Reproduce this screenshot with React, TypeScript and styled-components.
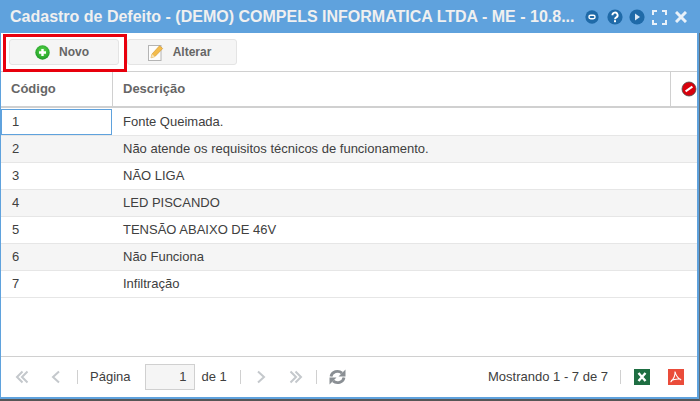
import React from 'react'
import styled, { createGlobalStyle } from 'styled-components'

const GlobalStyle = createGlobalStyle`
    html, body {
        margin: 0;
        padding: 0;
        background: #fff;
    }
    body {
        font-family: "Liberation Sans", Arial, sans-serif;
        color: #404040;
    }
`

const Window = styled.div`
    position: relative;
    box-sizing: border-box;
    width: 700px;
    height: 401px;
    display: flex;
    flex-direction: column;
    background: #fff;
    border-right: 1px solid #5b6b78;
    border-bottom: 2px solid #565656;
`

const TitleBar = styled.div`
    height: 33px;
    flex: none;
    margin-right: -1px;
    padding: 1px 13px 0 10px;
    box-sizing: border-box;
    display: flex;
    align-items: center;
    background: #5fa2dd;
`

const Title = styled.div`
    flex: 1;
    font-size: 16px;
    font-weight: 700;
    color: #f0f0f0;
    white-space: nowrap;
`

const TitleTool = styled.span<{ $gap: number }>`
    display: flex;
    margin-left: ${p => p.$gap}px;
`

const Body = styled.div`
    flex: 1;
    min-height: 0;
    display: flex;
    flex-direction: column;
    border-style: solid;
    border-color: #5fa2dd;
    border-width: 0 2px 2px 1px;
`

const Toolbar = styled.div`
    height: 39px;
    flex: none;
    box-sizing: border-box;
    padding: 6px 8px 0;
    display: flex;
    gap: 8px;
    border-bottom: 1px solid #d0d0d0;
`

const ToolButton = styled.button<{ $shift: number }>`
    width: 110px;
    height: 26px;
    box-sizing: border-box;
    padding: 0 ${p => p.$shift}px 0 0;
    display: flex;
    align-items: center;
    justify-content: center;
    gap: 9px;
    background: #f5f5f5;
    border: 1px solid #e4e4e4;
    border-radius: 3px;
    font-family: inherit;
    font-size: 12px;
    font-weight: 700;
    color: #666;
`

const Highlight = styled.div`
    position: absolute;
    left: 3px;
    top: 34px;
    width: 124px;
    height: 38px;
    box-sizing: border-box;
    border: 3px solid #e8000d;
`

const HeaderRow = styled.div`
    height: 36px;
    flex: none;
    box-sizing: border-box;
    display: flex;
    border-bottom: 2px solid #d0d0d0;
    font-size: 13px;
    font-weight: 700;
    color: #666;
`

const HeaderCell = styled.div<{ $width?: number }>`
    ${p => (p.$width ? `width: ${p.$width}px; flex: none;` : 'flex: 1;')}
    box-sizing: border-box;
    display: flex;
    align-items: center;
    padding: 0 0 2px 10px;
    border-right: 1px solid #d0d0d0;
`

const IconHeaderCell = styled.div`
    width: 26px;
    flex: none;
    display: flex;
    align-items: center;
    justify-content: flex-end;
`

const Rows = styled.div`
    flex: 1;
    padding-top: 1px;
`

const Row = styled.div<{ $alt: boolean }>`
    height: 27px;
    box-sizing: border-box;
    display: flex;
    background: ${p => (p.$alt ? '#f5f5f5' : '#fff')};
    border-bottom: 1px solid #e6e6e6;
    font-size: 13px;
    color: #404040;
`

const Cell = styled.div<{ $focused?: boolean }>`
    box-sizing: border-box;
    display: flex;
    align-items: center;
    width: 111px;
    flex: none;
    padding: 0 0 1px 10px;
    border: 1px solid ${p => (p.$focused ? '#5fa2dd' : 'transparent')};
`

const DescCell = styled.div`
    flex: 1;
    display: flex;
    align-items: center;
    padding: 0 0 2px 11px;
`

const Footer = styled.div`
    height: 41px;
    flex: none;
    box-sizing: border-box;
    padding: 0 13px 0 14px;
    display: flex;
    align-items: center;
    border-top: 1px solid #d0d0d0;
    font-size: 13px;
    color: #404040;
`

const PagerIcon = styled.span<{ $gap: number }>`
    display: flex;
    margin-right: ${p => p.$gap}px;
`

const Divider = styled.span<{ $gap: number }>`
    width: 1px;
    height: 14px;
    background: #d0d0d0;
    margin-right: ${p => p.$gap}px;
`

const PageLabel = styled.span<{ $gap: number }>`
    margin: 0 ${p => p.$gap}px 2px 0;
    white-space: nowrap;
`

const PageInput = styled.div`
    width: 50px;
    height: 26px;
    box-sizing: border-box;
    margin-right: 6px;
    padding: 0 8px 2px 0;
    display: flex;
    align-items: center;
    justify-content: flex-end;
    background: #f5f5f5;
    border: 1px solid #d0d0d0;
`

const Spacer = styled.div`
    flex: 1;
`

const CircleIcon = ({ size = 16, children }: { size?: number; children: React.ReactNode }) => (
    <svg width={size} height={size} viewBox="0 0 16 16">
        <circle cx="8" cy="8" r="7.6" fill="#1f6aa8" />
        {children}
    </svg>
)

const PlusIcon = () => (
    <svg width="15" height="15" viewBox="0 0 15 15">
        <defs>
            <radialGradient id="novoGreen" cx="50%" cy="40%" r="60%">
                <stop offset="0%" stopColor="#5fdc4c" />
                <stop offset="100%" stopColor="#1c9a26" />
            </radialGradient>
        </defs>
        <circle cx="7.5" cy="7.5" r="7.2" fill="url(#novoGreen)" />
        <path d="M7.5 4v7M4 7.5h7" stroke="#fff" strokeWidth="2.4" />
    </svg>
)

const PencilIcon = () => (
    <svg width="16" height="17" viewBox="0 0 16 17">
        <rect x="0.5" y="1.5" width="12.5" height="15" fill="#fdfdfd" stroke="#b4b4b4" />
        <path d="M3 13.8l1-3.8 7.5-8.2 3.2 2.7-7.7 8z" fill="#f3bc4c" stroke="#d09428" strokeWidth="0.6" />
        <path d="M3 13.8l1-3.8 3 2.7z" fill="#f7e2b4" />
    </svg>
)

const NoEntryIcon = () => (
    <svg width="16" height="16" viewBox="0 0 16 16">
        <circle cx="8" cy="8" r="7" fill="#d8000c" stroke="#4a4a4a" strokeWidth="0.8" />
        <path d="M4.6 10.4l6.8-4.8" stroke="#fff" strokeWidth="2" />
    </svg>
)

const Chevron = ({ dir, double }: { dir: 'left' | 'right'; double?: boolean }) => (
    <svg width="14" height="14" viewBox="0 0 14 14" fill="none" stroke="#c4c8cc" strokeWidth="2">
        {dir === 'left' ? (
            <>
                <path d={double ? 'M7.5 1.5L2 7l5.5 5.5' : 'M10 1.5L4 7l6 5.5'} />
                {double && <path d="M12.5 1.5L7 7l5.5 5.5" />}
            </>
        ) : (
            <>
                <path d={double ? 'M1.5 1.5L7 7l-5.5 5.5' : 'M4 1.5L10 7l-6 5.5'} />
                {double && <path d="M6.5 1.5L12 7l-5.5 5.5" />}
            </>
        )}
    </svg>
)

const RefreshIcon = () => (
    <svg width="17" height="16" viewBox="0 0 17 16" fill="none" stroke="#8a8f94" strokeWidth="2.8">
        <path d="M2 7.5a6.5 6 0 0 1 11-3.4" />
        <path d="M15 8.5a6.5 6 0 0 1-11 3.4" />
        <path d="M16.5 0.5v7h-7z" fill="#8a8f94" stroke="none" />
        <path d="M0.5 15.5v-7h7z" fill="#8a8f94" stroke="none" />
    </svg>
)

const ExcelIcon = () => (
    <svg width="16" height="16" viewBox="0 0 16 16">
        <rect width="16" height="16" fill="#1e6e42" />
        <path d="M4.5 4l7 8M11.5 4l-7 8" stroke="#fff" strokeWidth="2.4" />
    </svg>
)

const PdfIcon = () => (
    <svg width="16" height="16" viewBox="0 0 16 16">
        <rect width="16" height="16" fill="#ea4c3a" />
        <path d="M7 2.5c.6 3 2.6 6.6 6.2 8.5M7 2.5c.4 3.6-1.6 7.8-4.4 10.6M3 11.6c3-1.4 6.4-2 9.8-1.4" fill="none" stroke="#fff" strokeWidth="1.1" />
    </svg>
)

const defects = [
    'Fonte Queimada.',
    'Não atende os requisitos técnicos de funcionamento.',
    'NÃO LIGA',
    'LED PISCANDO',
    'TENSÃO ABAIXO DE 46V',
    'Não Funciona',
    'Infiltração',
]

const App = () => {
    return (
        <Window>
            <GlobalStyle />
            <TitleBar>
                <Title>Cadastro de Defeito - (DEMO) COMPELS INFORMATICA LTDA - ME - 10.8...</Title>
                <TitleTool $gap={0}>
                    <CircleIcon size={14}>
                        <rect x="4.5" y="6" width="7" height="4" rx="2" fill="none" stroke="#fff" strokeWidth="1.6" />
                    </CircleIcon>
                </TitleTool>
                <TitleTool $gap={8}>
                    <CircleIcon>
                        <path d="M5.4 6.2a2.6 2.6 0 1 1 3.9 2.2c-.9.5-1.3.8-1.3 1.8" fill="none" stroke="#fff" strokeWidth="1.9" />
                        <rect x="7" y="11.2" width="2" height="2" fill="#fff" />
                    </CircleIcon>
                </TitleTool>
                <TitleTool $gap={6}>
                    <CircleIcon>
                        <path d="M6 4.5l5 3.5-5 3.5z" fill="#dce9f5" />
                    </CircleIcon>
                </TitleTool>
                <TitleTool $gap={7}>
                    <svg width="15" height="15" viewBox="0 0 15 15" fill="none" stroke="#e8f1f9" strokeWidth="2">
                        <path d="M1 5V1h4M10 1h4v4M14 10v4h-4M5 14H1v-4" />
                    </svg>
                </TitleTool>
                <TitleTool $gap={8}>
                    <svg width="12" height="12" viewBox="0 0 12 12" fill="none" stroke="#e8f1f9" strokeWidth="3">
                        <path d="M1 1l10 10M11 1L1 11" />
                    </svg>
                </TitleTool>
            </TitleBar>
            <Body>
                <Toolbar>
                    <ToolButton $shift={4}>
                        <PlusIcon />
                        Novo
                    </ToolButton>
                    <ToolButton $shift={5}>
                        <PencilIcon />
                        Alterar
                    </ToolButton>
                </Toolbar>
                <HeaderRow>
                    <HeaderCell $width={112}>Código</HeaderCell>
                    <HeaderCell>Descrição</HeaderCell>
                    <IconHeaderCell>
                        <NoEntryIcon />
                    </IconHeaderCell>
                </HeaderRow>
                <Rows>
                    {defects.map((text, i) => (
                        <Row key={text} $alt={i % 2 === 1}>
                            <Cell $focused={i === 0}>{i + 1}</Cell>
                            <DescCell>{text}</DescCell>
                        </Row>
                    ))}
                </Rows>
                <Footer>
                    <PagerIcon $gap={20}><Chevron dir="left" double /></PagerIcon>
                    <PagerIcon $gap={14}><Chevron dir="left" /></PagerIcon>
                    <Divider $gap={12} />
                    <PageLabel $gap={15}>Página</PageLabel>
                    <PageInput>1</PageInput>
                    <PageLabel $gap={13}>de 1</PageLabel>
                    <Divider $gap={13} />
                    <PagerIcon $gap={21}><Chevron dir="right" /></PagerIcon>
                    <PagerIcon $gap={13}><Chevron dir="right" double /></PagerIcon>
                    <Divider $gap={12} />
                    <RefreshIcon />
                    <Spacer />
                    <PageLabel $gap={12}>Mostrando 1 - 7 de 7</PageLabel>
                    <Divider $gap={13} />
                    <PagerIcon $gap={18}><ExcelIcon /></PagerIcon>
                    <PdfIcon />
                </Footer>
            </Body>
            <Highlight />
        </Window>
    )
}

export default App
